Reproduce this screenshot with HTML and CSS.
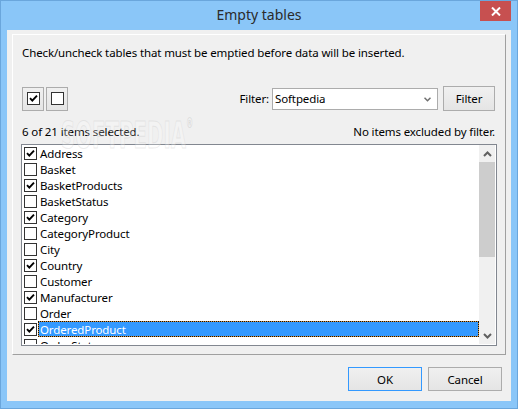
FILE: index.html
```html
<!DOCTYPE html>
<html>
<head>
<meta charset="utf-8">
<link rel="stylesheet" href="styles.css">
</head>
<body>
<div class="window">
  <div class="titlebar">
    <span class="title">Empty tables</span>
    <div class="close"><svg width="10" height="9" viewBox="0 0 10 9"><path d="M1 0.5 L9 8.5 M9 0.5 L1 8.5" stroke="#fff" stroke-width="2"/></svg></div>
  </div>
  <div class="client">
    <div class="panel">
      <p class="intro">Check/uncheck tables that must be emptied before data will be inserted.</p>
      <div class="toolbar">
        <button class="iconbtn"><span class="cb on"><svg viewBox="0 0 11 11"><path d="M2 5.2 L4.3 7.6 L9 2.6" fill="none" stroke="#000" stroke-width="1.9"/></svg></span></button>
        <button class="iconbtn"><span class="cb"></span></button>
        <div class="spacer"></div>
        <span class="flabel">Filter:</span>
        <div class="combo"><span>Softpedia</span><svg class="chev" width="7" height="5" viewBox="0 0 7 5"><path d="M0.5 0.8 L3.5 3.8 L6.5 0.8" fill="none" stroke="#707070" stroke-width="1.5"/></svg></div>
        <button class="btn fbtn">Filter</button>
      </div>
      <div class="status"><span>6 of 21 items selected.</span><span>No items excluded by filter.</span></div>
      <div class="list">
        <div class="rows">
          <div class="row"><span class="cb on"><svg viewBox="0 0 11 11"><path d="M2 5.2 L4.3 7.6 L9 2.6" fill="none" stroke="#000" stroke-width="1.9"/></svg></span><span class="lbl">Address</span></div>
          <div class="row"><span class="cb"></span><span class="lbl">Basket</span></div>
          <div class="row"><span class="cb on"><svg viewBox="0 0 11 11"><path d="M2 5.2 L4.3 7.6 L9 2.6" fill="none" stroke="#000" stroke-width="1.9"/></svg></span><span class="lbl">BasketProducts</span></div>
          <div class="row"><span class="cb"></span><span class="lbl">BasketStatus</span></div>
          <div class="row"><span class="cb on"><svg viewBox="0 0 11 11"><path d="M2 5.2 L4.3 7.6 L9 2.6" fill="none" stroke="#000" stroke-width="1.9"/></svg></span><span class="lbl">Category</span></div>
          <div class="row"><span class="cb"></span><span class="lbl">CategoryProduct</span></div>
          <div class="row"><span class="cb"></span><span class="lbl">City</span></div>
          <div class="row"><span class="cb on"><svg viewBox="0 0 11 11"><path d="M2 5.2 L4.3 7.6 L9 2.6" fill="none" stroke="#000" stroke-width="1.9"/></svg></span><span class="lbl">Country</span></div>
          <div class="row"><span class="cb"></span><span class="lbl">Customer</span></div>
          <div class="row"><span class="cb on"><svg viewBox="0 0 11 11"><path d="M2 5.2 L4.3 7.6 L9 2.6" fill="none" stroke="#000" stroke-width="1.9"/></svg></span><span class="lbl">Manufacturer</span></div>
          <div class="row"><span class="cb"></span><span class="lbl">Order</span></div>
          <div class="row sel"><span class="cb on"><svg viewBox="0 0 11 11"><path d="M2 5.2 L4.3 7.6 L9 2.6" fill="none" stroke="#000" stroke-width="1.9"/></svg></span><span class="lbl">OrderedProduct</span></div>
          <div class="row"><span class="cb"></span><span class="lbl">OrderStatus</span></div>
        </div>
        <div class="scrollbar">
          <div class="sbtn"><svg width="9" height="6" viewBox="0 0 9 6"><path d="M1 5 L4.5 1.5 L8 5" fill="none" stroke="#606060" stroke-width="2"/></svg></div>
          <div class="thumb"></div>
          <div class="track"></div>
          <div class="sbtn"><svg width="9" height="6" viewBox="0 0 9 6"><path d="M1 1 L4.5 4.5 L8 1" fill="none" stroke="#606060" stroke-width="2"/></svg></div>
        </div>
      </div>
    </div>
    <div class="footer">
      <button class="btn dbtn default">OK</button>
      <button class="btn dbtn">Cancel</button>
    </div>
  </div>
  <div class="watermark">SOFTPEDIA<sup>®</sup></div>
</div>
</body>
</html>
```

FILE: styles.css
```css
* { box-sizing: border-box; }
html, body { margin: 0; padding: 0; }
body { width: 518px; height: 409px; overflow: hidden; font-family: "Noto Sans", "Open Sans", sans-serif; font-size: 11.5px; letter-spacing: -0.12px; color: #000; }

.window {
  position: relative;
  width: 518px; height: 409px;
  background: #8ac6f8;
  border: 1px solid #6aa6dc;
  display: flex; flex-direction: column;
}
.titlebar {
  height: 29px;
  display: grid;
  grid-template-columns: 1fr auto 1fr;
  align-items: start;
}
.title {
  grid-column: 2;
  font-size: 14px;
  letter-spacing: 0;
  line-height: 20px;
  margin-top: 4px;
  color: #2b2b2b;
}
.close {
  grid-column: 3;
  justify-self: end;
  width: 31px; height: 20px;
  margin-right: 6px;
  background: #c75050;
  display: flex; align-items: center; justify-content: center;
}
.close svg { display: block; }

.client {
  margin: 0 6px 0 6px;
  height: 371px;
  background: #f0f0f0;
  display: flex; flex-direction: column;
}
.panel {
  margin: 4px 0 0 5px;
  width: 494px; height: 321px;
  border-top: 1px solid #fff;
  border-left: 1px solid #fff;
  border-right: 1px solid #a0a0a0;
  border-bottom: 1px solid #a0a0a0;
  padding: 10px 8px 0 8px;
  display: flex; flex-direction: column;
}
.intro { margin: 0 0 0 1px; line-height: 16px; }

.toolbar {
  margin: 25px 2px 0 1px;
  height: 25px;
  display: flex; align-items: center;
}
.iconbtn {
  width: 22px; height: 24px;
  margin: 0 2px 0 0;
  padding: 0;
  border: 1px solid #acacac;
  background: linear-gradient(#f0f0f0, #e5e5e5);
  display: flex; align-items: center; justify-content: center;
}
.spacer { flex: 1; }
.flabel { margin-right: 3px; }
.combo {
  width: 166px; height: 22px;
  background: #fff;
  border: 1px solid #acacac;
  display: flex; align-items: center; justify-content: space-between;
  padding: 0 6px 0 2px;
  margin-right: 5px;
}
.chev { display: block; margin-top: 1px; }
.btn {
  font-family: inherit; font-size: 11.5px; letter-spacing: -0.12px; color: #000;
  border: 1px solid #acacac;
  background: linear-gradient(#f0f0f0, #e5e5e5);
  padding: 0;
}
.fbtn { width: 52px; height: 25px; }

.cb {
  width: 13px; height: 13px;
  border: 1px solid #333;
  background: #fff;
  display: block;
  flex: none;
}
.cb svg { display: block; width: 11px; height: 11px; }

.status {
  margin: 13px 2px 0 1px;
  line-height: 16px;
  display: flex; justify-content: space-between;
}

.list {
  margin-top: 4px;
  height: 202px;
  background: #fff;
  border: 1px solid #828790;
  padding: 0 1px 1px 0;
  display: flex;
}
.rows { flex: 1; overflow: hidden; }
.row { height: 16px; display: flex; align-items: flex-start; padding-left: 2px; }
.row .cb { margin-top: 2px; margin-right: 1px; }
.lbl {
  flex: 1;
  height: 16px;
  line-height: 15px;
  padding-left: 1px;
  border: 1px solid transparent;
  white-space: nowrap;
}
.row.sel .lbl {
  color: #fff;
  border: 1px dotted #111;
  background: linear-gradient(#3399ff, #3399ff) padding-box, linear-gradient(#d8953c, #d8953c) border-box;
}

.scrollbar {
  width: 16px;
  background: #f0f0f0;
  display: flex; flex-direction: column;
}
.sbtn { height: 17px; display: flex; align-items: center; justify-content: center; }
.thumb { height: 95px; background: #cdcdcd; }
.track { flex: 1; }

.footer {
  margin-top: 12px;
  display: flex; justify-content: flex-end;
  padding-right: 9px;
  gap: 6px;
}
.dbtn { width: 74px; height: 24px; }
.dbtn.default { border-color: #3399ff; }

.watermark {
  position: absolute;
  left: 60px; top: 112px;
  font-family: "DejaVu Sans", sans-serif;
  font-weight: bold;
  font-size: 38px;
  line-height: 44px;
  letter-spacing: 0;
  transform: scaleX(0.52);
  transform-origin: left top;
  color: rgba(255,255,255,0.25);
  -webkit-text-stroke: 1px rgba(200,200,200,0.35);
  pointer-events: none;
}
.watermark sup { font-size: 14px; font-weight: normal; vertical-align: top; line-height: 20px; -webkit-text-stroke: 0; color: rgba(190,190,190,0.5); }
```
